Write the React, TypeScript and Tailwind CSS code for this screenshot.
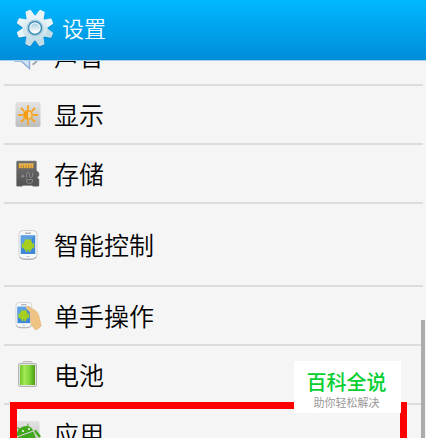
import React from 'react';

interface SettingItem {
    id: string;
    label: string;
    icon: React.ReactNode;
    tall?: boolean;
    marked?: boolean;
}

const teeth = [0, 45, 90, 135, 180, 225, 270, 315];

const GearIcon: React.FC = () => (
    <svg viewBox="0 0 40 40" className="h-10 w-10 shrink-0" aria-hidden="true">
        <defs>
            <linearGradient id="gear" x1="0" y1="0" x2="0" y2="40" gradientUnits="userSpaceOnUse">
                <stop offset="0" stopColor="#f6fbfd" />
                <stop offset="1" stopColor="#b7d6e2" />
            </linearGradient>
            <linearGradient id="hub" x1="0" y1="0" x2="0" y2="1">
                <stop offset="0" stopColor="#a9cfe0" />
                <stop offset="1" stopColor="#ffffff" />
            </linearGradient>
        </defs>
        <g fill="#0873b4" opacity="0.4" transform="translate(0 1.3) rotate(-22 20 20)">
            {teeth.map((angle) => (
                <path key={angle} d="M15.500 9 L17 2.300 Q17.200 1.300 18.200 1.300 H21.800 Q22.800 1.300 23 2.300 L24.500 9 Z" transform={`rotate(${angle} 20 20)`} />
            ))}
            <circle cx="20" cy="20" r="12.500" />
        </g>
        <g transform="rotate(-22 20 20)">
            {teeth.map((angle) => (
                <path key={angle} d="M15.500 9 L17 2.300 Q17.200 1.300 18.200 1.300 H21.800 Q22.800 1.300 23 2.300 L24.500 9 Z" transform={`rotate(${angle} 20 20)`} fill={angle > 112 && angle < 248 ? '#c3dde8' : '#e8f3f8'} />
            ))}
        </g>
        <circle cx="20" cy="20" r="12.500" fill="url(#gear)" />
        <circle cx="20" cy="20" r="8" fill="#edf6fa" stroke="#a3cadb" strokeWidth="1" />
        <circle cx="20" cy="20" r="6.500" fill="#eef6fa" stroke="#3f8fb8" strokeWidth="1.500" />
        <circle cx="20" cy="20" r="4.600" fill="url(#hub)" />
    </svg>
);

const SoundIcon: React.FC = () => (
    <svg viewBox="0 0 28 28" className="h-7 w-7" aria-hidden="true">
        <path d="M1 10 V19 H7 L15.500 26.500 V4 L7 10 Z" fill="#d3e3f4" stroke="#8fafd8" strokeWidth="1.500" />
        <path d="M18.500 22.500 Q22.500 21 24 16" fill="none" stroke="#a3a9b0" strokeWidth="2" />
    </svg>
);

const DisplayIcon: React.FC = () => (
    <svg viewBox="0 0 28 28" className="h-7 w-7" aria-hidden="true">
        <defs>
            <linearGradient id="tile" x1="0" y1="0" x2="0" y2="1">
                <stop offset="0" stopColor="#e3e3e3" />
                <stop offset="1" stopColor="#bdbdbd" />
            </linearGradient>
        </defs>
        <rect x="1.500" y="1" width="25" height="25" rx="2.500" fill="url(#tile)" />
        <g stroke="#f5a31c" strokeWidth="1.800" strokeLinecap="round">
            {teeth.map((angle) => (
                <path key={angle} d="M14 4.800 V8" transform={`rotate(${angle} 14 14)`} />
            ))}
        </g>
        <circle cx="14" cy="14" r="4.200" fill="#f0d6a4" stroke="#f3a01a" strokeWidth="1.500" />
        <path d="M14 9.800 A4.200 4.200 0 0 0 14 18.200 Z" fill="#f59d12" />
    </svg>
);

const StorageIcon: React.FC = () => (
    <svg viewBox="0 0 28 28" className="h-7 w-7" aria-hidden="true">
        <defs>
            <linearGradient id="card" x1="0" y1="0" x2="0" y2="1">
                <stop offset="0" stopColor="#6e6e6e" />
                <stop offset="1" stopColor="#525252" />
            </linearGradient>
        </defs>
        <path d="M3.500 1 H21.500 Q22.500 1 22.500 2 V10.500 L25 12.800 V16 L23.500 17 V18 L25 19 V25.500 Q25 26.300 24 26.300 H19 L18 25.500 H9 L8 26.300 H3.300 Q2.500 26.300 2.500 25.500 V2 Q2.500 1 3.500 1 Z" fill="url(#card)" stroke="#858585" strokeWidth="0.500" />
        <path d="M5.800 3.800 V8.300 M8.300 3.800 V8.300 M10.800 3.800 V8.300 M13.300 3.800 V8.300 M15.800 3.800 V8.300 M18.300 3.800 V8.300" stroke="#f2b032" strokeWidth="2" />
        <path d="M5 4 H19.500" stroke="#f8c75c" strokeWidth="1" />
        <path d="M6.500 17.200 L8.700 14 L11 17.200 Z" fill="#8a8a8a" />
        <path d="M12.500 17.500 V13.500 Q12.500 12.500 14 12.500 Q15.500 12.500 15.500 14 V16 Q15.500 17.500 17 17.500 Q18.500 17.500 18.500 16.500 V12.500" fill="none" stroke="#868686" strokeWidth="1" />
        <path d="M12.500 19.500 H18.500 V21 Q18.500 23.500 15.500 23.500 Q12.500 23.500 12.500 21 Z" fill="none" stroke="#868686" strokeWidth="1" />
    </svg>
);

const PhoneShape: React.FC = () => (
    <>
        <rect x="5" y="0.500" width="18" height="28.500" rx="4" fill="#f7f8fa" stroke="#cfd1d5" strokeWidth="1" />
        <path d="M5.800 27 Q8 29.300 11 29.300 H17 Q20 29.300 22.200 27" fill="none" stroke="#a4a7ab" strokeWidth="1" />
        <rect x="6.800" y="5.500" width="14.400" height="18.500" fill="#3f88d8" />
        <path d="M6.800 5.500 H21.200 L6.800 18 Z" fill="#5d9fe4" />
        <path d="M11 3.200 H17" stroke="#8f9296" strokeWidth="1" />
        <path d="M12.500 26.500 H15.500" stroke="#c5c8cc" strokeWidth="1" />
        <g fill="#a6d01d" stroke="#a6d01d" strokeLinecap="round">
            <path d="M9.800 14 Q9.800 9.300 14 9.300 Q18.200 9.300 18.200 14 Z" stroke="none" />
            <rect x="9.800" y="13" width="8.400" height="6.500" rx="1" stroke="none" />
            <path d="M8.800 14.200 V17.200 M19.200 14.200 V17.200 M12.500 19 V21 M15.500 19 V21" strokeWidth="2" />
            <path d="M11.500 10.500 L10.600 9 M16.500 10.500 L17.400 9" strokeWidth="0.700" />
        </g>
    </>
);

const PhoneIcon: React.FC = () => (
    <svg viewBox="0 0 28 30" className="h-[30px] w-7" aria-hidden="true">
        <PhoneShape />
    </svg>
);

const OneHandIcon: React.FC = () => (
    <svg viewBox="0 0 28 30" className="h-[30px] w-7" aria-hidden="true">
        <g transform="translate(-2.500 1) scale(0.88)">
            <PhoneShape />
        </g>
        <path d="M12.500 5.500 Q14 4.800 15.500 6.200 L21.500 9.500 Q24.500 12 25.500 17 L27.200 24.500 Q26.500 27 21.500 29 L17 23.500 Q16 16 16.800 13.500 Q16.300 11 12.300 7.500 Q11.700 6.300 12.500 5.500 Z" fill="#eec384" stroke="#dcb272" strokeWidth="0.500" />
    </svg>
);

const BatteryIcon: React.FC = () => (
    <svg viewBox="0 0 28 28" className="h-7 w-7" aria-hidden="true">
        <defs>
            <linearGradient id="charge" x1="0" y1="0" x2="1" y2="0">
                <stop offset="0" stopColor="#6cc626" />
                <stop offset="0.300" stopColor="#a4ea58" />
                <stop offset="0.650" stopColor="#7dd235" />
                <stop offset="1" stopColor="#4b9c12" />
            </linearGradient>
        </defs>
        <path d="M9 3 V1.500 Q9 0.600 10 0.600 H17 Q18 0.600 18 1.500 V3" fill="#eeeeee" stroke="#b8b8b8" strokeWidth="1" />
        <rect x="4.500" y="2.500" width="18" height="23" rx="1.500" fill="#e2e2e2" stroke="#b4b4b4" strokeWidth="1" />
        <rect x="6" y="4" width="15" height="20" fill="url(#charge)" />
    </svg>
);

const AppsIcon: React.FC = () => (
    <svg viewBox="0 0 28 28" className="h-7 w-7" aria-hidden="true">
        <rect x="1" y="1" width="24.500" height="25" rx="2.500" fill="url(#tile)" />
        <g fill="#41a81c" stroke="#41a81c" transform="rotate(-20 14 14) translate(-2 0)">
            <path d="M5 12.500 Q6 5.500 13.500 5.500 Q21 5.500 22 12.500 Z" stroke="none" />
            <rect x="5" y="13.500" width="17" height="11" rx="1.500" stroke="none" />
            <path d="M9.500 6.500 L8.500 4.500 M18.500 6.500 L19.500 4.500" strokeWidth="1" strokeLinecap="round" />
            <path d="M2.800 15 V20" strokeWidth="2.500" strokeLinecap="round" />
            <path d="M24 14 L26 20" strokeWidth="2.500" strokeLinecap="round" />
        </g>
        <circle cx="9" cy="11" r="1" fill="#fff" />
        <circle cx="15" cy="9" r="1" fill="#fff" />
    </svg>
);

const items: SettingItem[] = [
    { id: 'sound', label: '声音', icon: <SoundIcon /> },
    { id: 'display', label: '显示', icon: <DisplayIcon /> },
    { id: 'storage', label: '存储', icon: <StorageIcon /> },
    { id: 'smart', label: '智能控制', icon: <PhoneIcon />, tall: true },
    { id: 'onehand', label: '单手操作', icon: <OneHandIcon /> },
    { id: 'battery', label: '电池', icon: <BatteryIcon /> },
    { id: 'apps', label: '应用', icon: <AppsIcon />, marked: true },
];

const SettingRow: React.FC<{ item: SettingItem }> = ({ item }) => (
    <li className="relative border-b-2 border-[#dcdcdc]">
        <button
            type="button"
            className={`flex w-full items-center gap-3 pb-[2px] pl-[10px] text-left ${item.tall ? 'h-[81px]' : 'h-[57px]'}`}
        >
            <span className="flex w-7 shrink-0 justify-center pt-[2px]">{item.icon}</span>
            <span className="text-[25px] leading-8 font-[350] text-black">{item.label}</span>
        </button>
        {item.marked && (
            <div className="pointer-events-none absolute -top-[3px] right-4 -bottom-1 left-[6px] border-7 border-[#ff0000]" />
        )}
    </li>
);

const App: React.FC = () => {
    return (
        <div className="relative flex h-screen flex-col overflow-hidden bg-[#f5f5f5] font-['Noto_Sans_CJK_SC',sans-serif]">
            <header className="z-10 flex h-[61px] shrink-0 items-center gap-[7px] border-b border-[#a5d3ea] bg-linear-to-b from-[#00b9ff] to-[#008cd9] pr-4 pb-1 pl-[15px]">
                <GearIcon />
                <h1 className="pb-[2px] text-[22px] leading-8 font-[350] text-white">设置</h1>
            </header>
            <main className="min-h-0 flex-1 overflow-hidden">
                <ul className="-mt-[34px] mr-[3px] ml-1">
                    {items.map((item) => (
                        <SettingRow key={item.id} item={item} />
                    ))}
                </ul>
            </main>
            <div className="absolute top-80 right-[1px] bottom-0 w-1 bg-[#acacac]" />
            <aside className="absolute right-[25px] bottom-[25px] flex h-[52px] w-[107px] flex-col items-center bg-white pt-[7px] pr-[2px]">
                <p className="text-xl leading-7 font-medium text-[#06cf32]">百科全说</p>
                <p className="text-[11px] leading-3 text-[#999999]">助你轻松解决</p>
            </aside>
        </div>
    );
}

export default App;
